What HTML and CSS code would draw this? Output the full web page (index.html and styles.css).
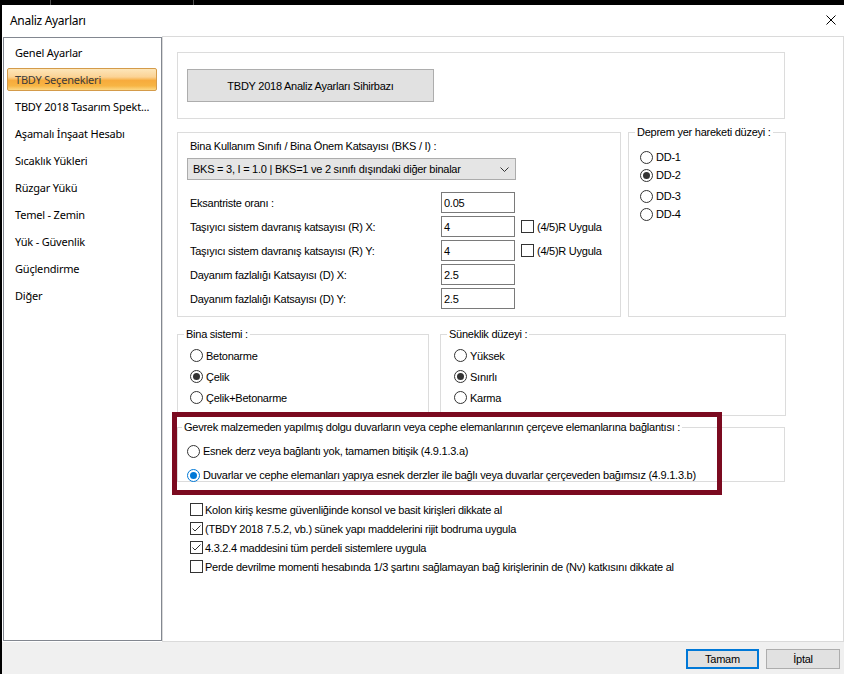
FILE: index.html
```html
<!DOCTYPE html>
<html lang="tr">
<head>
<meta charset="utf-8">
<title>Analiz Ayarları</title>
<link rel="stylesheet" href="styles.css">
</head>
<body>
<div class="desktop">
  <div class="window">
    <div class="titlebar">
      <span class="title">Analiz Ayarları</span>
      <svg class="close" width="10" height="10" viewBox="0 0 10 10"><path d="M0.5 0.5 L9.5 9.5 M9.5 0.5 L0.5 9.5" stroke="#000" stroke-width="1" fill="none"/></svg>
    </div>
    <div class="main">
      <nav class="nav">
        <div class="nav-item">Genel Ayarlar</div>
        <div class="nav-item active">TBDY Seçenekleri</div>
        <div class="nav-item">TBDY 2018 Tasarım Spekt...</div>
        <div class="nav-item">Aşamalı İnşaat Hesabı</div>
        <div class="nav-item">Sıcaklık Yükleri</div>
        <div class="nav-item">Rüzgar Yükü</div>
        <div class="nav-item">Temel - Zemin</div>
        <div class="nav-item">Yük - Güvenlik</div>
        <div class="nav-item">Güçlendirme</div>
        <div class="nav-item">Diğer</div>
      </nav>
      <section class="content">
        <div class="group wizard">
          <button class="btn wizard-btn">TBDY 2018 Analiz Ayarları Sihirbazı</button>
        </div>

        <div class="row row2">
          <div class="group bks">
            <div class="text-label">Bina Kullanım Sınıfı / Bina Önem Katsayısı (BKS / I) :</div>
            <div class="select">
              <span>BKS = 3, I = 1.0 | BKS=1 ve 2 sınıfı dışındaki diğer binalar</span>
              <svg width="9" height="5" viewBox="0 0 9 5"><path d="M0.5 0.5 L4.5 4.5 L8.5 0.5" stroke="#333" stroke-width="1" fill="none"/></svg>
            </div>
            <div class="fields">
              <span class="text-label">Eksantriste oranı :</span>
              <span class="input">0.05</span>
              <span></span>

              <span class="text-label">Taşıyıcı sistem davranış katsayısı (R) X:</span>
              <span class="input">4</span>
              <span class="opt check-opt"><span class="checkbox"></span>(4/5)R Uygula</span>

              <span class="text-label">Taşıyıcı sistem davranış katsayısı (R) Y:</span>
              <span class="input">4</span>
              <span class="opt check-opt"><span class="checkbox"></span>(4/5)R Uygula</span>

              <span class="text-label">Dayanım fazlalığı Katsayısı (D) X:</span>
              <span class="input">2.5</span>
              <span></span>

              <span class="text-label">Dayanım fazlalığı Katsayısı (D) Y:</span>
              <span class="input">2.5</span>
              <span></span>
            </div>
          </div>

          <div class="group deprem">
            <div class="legend">Deprem yer hareketi düzeyi :</div>
            <div class="opts">
              <div class="opt"><span class="radio"></span>DD-1</div>
              <div class="opt"><span class="radio on"></span>DD-2</div>
              <div class="opt spaced"><span class="radio"></span>DD-3</div>
              <div class="opt"><span class="radio"></span>DD-4</div>
            </div>
          </div>
        </div>

        <div class="row row3">
          <div class="group bina">
            <div class="legend">Bina sistemi :</div>
            <div class="opts">
              <div class="opt"><span class="radio"></span>Betonarme</div>
              <div class="opt"><span class="radio on"></span>Çelik</div>
              <div class="opt"><span class="radio"></span>Çelik+Betonarme</div>
            </div>
          </div>
          <div class="group sunek">
            <div class="legend">Süneklik düzeyi :</div>
            <div class="opts">
              <div class="opt"><span class="radio"></span>Yüksek</div>
              <div class="opt"><span class="radio on"></span>Sınırlı</div>
              <div class="opt"><span class="radio"></span>Karma</div>
            </div>
          </div>
        </div>

        <div class="group gevrek">
          <div class="legend">Gevrek malzemeden yapılmış dolgu duvarların veya cephe elemanlarının çerçeve elemanlarına bağlantısı :</div>
          <div class="opts">
            <div class="opt"><span class="radio"></span>Esnek derz veya bağlantı yok, tamamen bitişik (4.9.1.3.a)</div>
            <div class="opt"><span class="radio on blue"></span>Duvarlar ve cephe elemanları yapıya esnek derzler ile bağlı veya duvarlar çerçeveden bağımsız (4.9.1.3.b)</div>
          </div>
        </div>

        <div class="checks">
          <div class="opt"><span class="checkbox"></span>Kolon kiriş kesme güvenliğinde konsol ve basit kirişleri dikkate al</div>
          <div class="opt"><span class="checkbox on"><svg width="11" height="11" viewBox="0 0 11 11"><path d="M1.5 5.5 L4 8 L9.5 2.5" stroke="#333" stroke-width="1" fill="none"/></svg></span>(TBDY 2018 7.5.2, vb.) sünek yapı maddelerini rijit bodruma uygula</div>
          <div class="opt"><span class="checkbox on"><svg width="11" height="11" viewBox="0 0 11 11"><path d="M1.5 5.5 L4 8 L9.5 2.5" stroke="#333" stroke-width="1" fill="none"/></svg></span>4.3.2.4 maddesini tüm perdeli sistemlere uygula</div>
          <div class="opt"><span class="checkbox"></span>Perde devrilme momenti hesabında 1/3 şartını sağlamayan bağ kirişlerinin de (Nv) katkısını dikkate al</div>
        </div>

        <div class="highlight"></div>
      </section>
    </div>
    <div class="footer">
      <button class="btn primary">Tamam</button>
      <button class="btn cancel">İptal</button>
    </div>
  </div>
</div>
</body>
</html>
```
FILE: styles.css
```css
* { box-sizing: border-box; }
html, body { margin: 0; padding: 0; }
body {
  width: 844px;
  height: 674px;
  overflow: hidden;
  background: #000;
  font-family: "Liberation Sans", Arial, sans-serif;
  font-size: 11px;
  letter-spacing: -0.25px;
  color: #000;
}
.desktop {
  height: 674px;
  padding: 5px 0 0 2px;
  background:
    linear-gradient(90deg, transparent 50px, #505050 50px, #505050 51px, transparent 51px,
      transparent 193px, #505050 193px, #505050 194px, transparent 194px) top left / 100% 5px no-repeat,
    #000;
}
.window {
  width: 842px;
  height: 669px;
  background: #fff;
  display: flex;
  flex-direction: column;
}
.titlebar {
  flex: none;
  height: 31px;
  display: flex;
  align-items: center;
  justify-content: space-between;
  padding: 0 8px;
}
.title {
  font-family: "Noto Sans", sans-serif;
  font-size: 12px;
  letter-spacing: -0.3px;
}
.close { display: block; margin-top: -1px; }

.main {
  flex: none;
  height: 606px;
  display: flex;
}
.nav {
  flex: none;
  width: 159px;
  margin: 1px 0 1px 1px;
  border: 1px solid #828790;
  padding: 3px 4px 0 3px;
  font-family: "Noto Sans", sans-serif;
  font-size: 11px;
  letter-spacing: -0.2px;
}
.nav-item {
  height: 23px;
  line-height: 21px;
  margin-bottom: 4px;
  padding-left: 7px;
  border: 1px solid transparent;
  border-radius: 2px;
  white-space: nowrap;
}
.nav-item.active {
  color: #3c3c3c;
  border-color: #d49b4a;
  background: linear-gradient(to bottom, #fde6b9 0%, #fbd395 38%, #f7ab3c 55%, #f7b544 80%, #fcd885 100%);
}

.content {
  flex: 1;
  position: relative;
  border: 1px solid #dadada;
  padding: 15px 0 0 14px;
}
.group { border: 1px solid #dcdcdc; }
.wizard {
  width: 608px;
  padding: 16px 9px;
}
.btn {
  font: inherit;
  letter-spacing: inherit;
  color: #000;
  background: #e1e1e1;
  border: 1px solid #adadad;
  padding: 0;
  margin: 0;
  height: 20px;
}
.wizard-btn {
  display: block;
  width: 247px;
  height: 33px;
}

.row { display: flex; }
.row2 { margin-top: 13px; gap: 7px; }
.bks {
  width: 444px;
  height: 185px;
  padding: 6px 0 0 9px;
}
.text-label {
  padding-left: 3px;
  line-height: 14px;
  white-space: nowrap;
}
.select {
  width: 329px;
  height: 22px;
  margin-top: 5px;
  border: 1px solid #acacac;
  background: #e5e5e5;
  display: flex;
  align-items: center;
  justify-content: space-between;
  padding: 0 6px 0 5px;
  white-space: nowrap;
}
.select svg { display: block; }
.fields {
  margin-top: 12px;
  display: grid;
  grid-template-columns: 254px 74px auto;
  row-gap: 3px;
  align-items: center;
}
.input {
  height: 21px;
  border: 1px solid #7a7a7a;
  background: #fff;
  padding-left: 2px;
  display: flex;
  align-items: center;
}
.check-opt { margin-left: 6px; }

.legend {
  width: max-content;
  margin: -8px 0 0 6px;
  padding: 0 2px;
  background: #fff;
  line-height: 14px;
  white-space: nowrap;
}
.opt {
  display: flex;
  align-items: center;
  gap: 3px;
  white-space: nowrap;
}
.radio {
  flex: none;
  width: 13px;
  height: 13px;
  border: 1px solid #333;
  border-radius: 50%;
  background: #fff;
  display: flex;
  align-items: center;
  justify-content: center;
}
.radio.on::after {
  content: "";
  width: 7px;
  height: 7px;
  border-radius: 50%;
  background: #333;
}
.radio.blue { border-color: #0078d7; }
.radio.blue::after { background: #0078d7; }
.checkbox {
  flex: none;
  width: 13px;
  height: 13px;
  border: 1px solid #333;
  background: #fff;
  display: flex;
  align-items: center;
  justify-content: center;
}
.checkbox svg { display: block; }

.deprem {
  width: 158px;
  height: 185px;
}
.deprem .opts { margin-top: 9px; padding-left: 11px; }
.deprem .opt { height: 18px; }
.deprem .opt.spaced { margin-top: 3px; }

.row3 { margin-top: 17px; gap: 11px; }
.bina { width: 252px; height: 82px; }
.sunek { width: 346px; height: 82px; }
.bina .opts, .sunek .opts { margin-top: 4px; }
.bina .opts { padding-left: 12px; }
.sunek .opts { padding-left: 13px; }
.bina .opt, .sunek .opt { height: 21px; }

.gevrek {
  width: 608px;
  height: 55px;
  margin-top: 11px;
}
.gevrek .legend { margin-left: 4px; }
.gevrek .opts { margin-top: 5px; padding-left: 9px; }
.gevrek .opt { height: 24px; }

.checks {
  margin-top: 18px;
  padding-left: 13px;
}
.checks .opt { height: 19px; gap: 2px; }

.highlight {
  position: absolute;
  left: 9px;
  top: 375px;
  width: 550px;
  height: 83px;
  border: 5px solid #7b0a20;
  pointer-events: none;
}

.footer {
  flex: 1;
  background: #f0f0f0;
  display: flex;
  justify-content: flex-end;
  gap: 7px;
  padding: 7px 4px 0 0;
}
.footer .btn { height: 20px; }
.btn.primary { width: 73px; border: 2px solid #0078d7; }
.btn.cancel { width: 74px; }
```
